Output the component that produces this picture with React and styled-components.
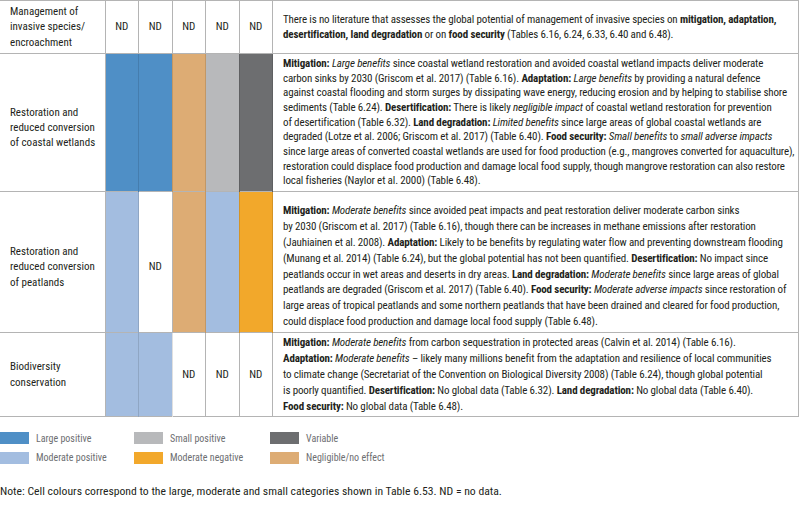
import React from "react"
import styled, { createGlobalStyle } from "styled-components"

const colors = {
  large: "#4f8fc6",
  moderate: "#a3bde0",
  small: "#b8b9bb",
  variable: "#6d6e70",
  negative: "#f2a82b",
  negligible: "#ddac74",
}

const GlobalStyle = createGlobalStyle`
  body {
    margin: 0;
    background: #fff;
    font-family: "Roboto Condensed", "Roboto", sans-serif;
    font-stretch: 75%;
    color: #231f20;
  }
`

// each row: label, swatch colours (null = ND), text lines as set in the source table
const rows = [
  {
    label: "Management of invasive species/ encroachment",
    height: 53,
    lineHeight: 15.3,
    shift: 0,
    textShift: 0,
    cells: [null, null, null, null, null],
    lines: [
      <>
        There is no literature that assesses the global potential of management of invasive species on{" "}
        <b>mitigation, adaptation,</b>
      </>,
      <>
        <b>desertification, land degradation</b> or on <b>food security</b> (Tables 6.16, 6.24, 6.33, 6.40 and
        6.48).
      </>,
    ],
  },
  {
    label: "Restoration and reduced conversion of coastal wetlands",
    height: 138,
    lineHeight: 14.7,
    shift: 10,
    textShift: 1,
    cells: ["large", "large", "negligible", "small", "variable"],
    lines: [
      <>
        <b>Mitigation:</b> <i>Large benefits</i> since coastal wetland restoration and avoided coastal wetland
        impacts deliver moderate
      </>,
      <>
        carbon sinks by 2030 (Griscom et al. 2017) (Table 6.16). <b>Adaptation:</b> <i>Large benefits</i> by
        providing a natural defence
      </>,
      <>
        against coastal flooding and storm surges by dissipating wave energy, reducing erosion and by helping to
        stabilise shore
      </>,
      <>
        sediments (Table 6.24). <b>Desertification:</b> There is likely <i>negligible impact</i> of coastal
        wetland restoration for prevention
      </>,
      <>
        of desertification (Table 6.32). <b>Land degradation:</b> <i>Limited benefits</i> since large areas of
        global coastal wetlands are
      </>,
      <>
        degraded (Lotze et al. 2006; Griscom et al. 2017) (Table 6.40). <b>Food security:</b>{" "}
        <i>Small benefits</i> to <i>small adverse impacts</i>
      </>,
      <>
        since large areas of converted coastal wetlands are used for food production (e.g., mangroves converted
        for aquaculture),
      </>,
      <>
        restoration could displace food production and damage local food supply, though mangrove restoration can
        also restore
      </>,
      <>local fisheries (Naylor et al. 2000) (Table 6.48).</>,
    ],
  },
  {
    label: "Restoration and reduced conversion of peatlands",
    height: 141,
    lineHeight: 15.9,
    shift: 10,
    textShift: 9,
    cells: ["moderate", null, "negligible", "moderate", "negative"],
    lines: [
      <>
        <b>Mitigation:</b> <i>Moderate benefits</i> since avoided peat impacts and peat restoration deliver
        moderate carbon sinks
      </>,
      <>
        by 2030 (Griscom et al. 2017) (Table 6.16), though there can be increases in methane emissions after
        restoration
      </>,
      <>
        (Jauhiainen et al. 2008). <b>Adaptation:</b> Likely to be benefits by regulating water flow and
        preventing downstream flooding
      </>,
      <>
        (Munang et al. 2014) (Table 6.24), but the global potential has not been quantified.{" "}
        <b>Desertification:</b> No impact since
      </>,
      <>
        peatlands occur in wet areas and deserts in dry areas. <b>Land degradation:</b>{" "}
        <i>Moderate benefits</i> since large areas of global
      </>,
      <>
        peatlands are degraded (Griscom et al. 2017) (Table 6.40). <b>Food security:</b>{" "}
        <i>Moderate adverse impacts</i> since restoration of
      </>,
      <>
        large areas of tropical peatlands and some northern peatlands that have been drained and cleared for food
        production,
      </>,
      <>could displace food production and damage local food supply (Table 6.48).</>,
    ],
  },
  {
    label: "Biodiversity conservation",
    height: 84,
    lineHeight: 16,
    shift: 0,
    textShift: 0,
    cells: ["moderate", "moderate", null, null, null],
    lines: [
      <>
        <b>Mitigation:</b> <i>Moderate benefits</i> from carbon sequestration in protected areas (Calvin et al.
        2014) (Table 6.16).
      </>,
      <>
        <b>Adaptation:</b> <i>Moderate benefits</i> – likely many millions benefit from the adaptation and
        resilience of local communities
      </>,
      <>
        to climate change (Secretariat of the Convention on Biological Diversity 2008) (Table 6.24), though global
        potential
      </>,
      <>
        is poorly quantified. <b>Desertification:</b> No global data (Table 6.32). <b>Land degradation:</b> No
        global data (Table 6.40).
      </>,
      <>
        <b>Food security:</b> No global data (Table 6.48).
      </>,
    ],
  },
]

const legend = [
  ["large", "Large positive"],
  ["small", "Small positive"],
  ["variable", "Variable"],
  ["moderate", "Moderate positive"],
  ["negative", "Moderate negative"],
  ["negligible", "Negligible/no effect"],
]

const colWidths = [105, 33.5, 33.5, 33.5, 33.5, 33.5, null]

const App = () => (
  <Page>
    <GlobalStyle />
    <Table>
      <colgroup>
        {colWidths.map((w, i) => (
          <Col key={i} $width={w} />
        ))}
      </colgroup>
      <tbody>
        {rows.map((row, i) => (
          <Row key={i} $height={row.height}>
            <Label $shift={row.shift}>{row.label}</Label>
            {row.cells.map((c, j) => (
              <Swatch key={j} $color={c && colors[c]} $shift={row.shift}>
                {c ? null : "ND"}
              </Swatch>
            ))}
            <Text $lineHeight={row.lineHeight} $shift={row.textShift}>
              {row.lines.map((line, k) => (
                <Line key={k}>{line}</Line>
              ))}
            </Text>
          </Row>
        ))}
      </tbody>
    </Table>
    <Legend>
      {legend.map(([key, name]) => (
        <LegendItem key={key}>
          <LegendBox $color={colors[key]} />
          {name}
        </LegendItem>
      ))}
    </Legend>
    <Note>
      Note: Cell colours correspond to the large, moderate and small categories shown in Table 6.53. ND = no data.
    </Note>
  </Page>
)

export default App

const Page = styled.div`
  width: 800px;
  height: 508px;
  overflow: hidden;
`

const Table = styled.table`
  width: 799px;
  border-collapse: collapse;
  table-layout: fixed;
  font-size: 11px;
  line-height: 15.3px;
`

const Col = styled.col`
  width: ${p => (p.$width ? `${p.$width}px` : "auto")};
`

const Row = styled.tr`
  height: ${p => p.$height}px;
  border-top: 1px solid #b4b4b4;
  border-bottom: 1px solid #b4b4b4;
`

const Label = styled.td`
  padding: ${p => p.$shift}px 6px 0 10px;
  vertical-align: middle;
  border-right: 1px solid #b4b4b4;
`

const Swatch = styled.td`
  background: ${p => p.$color || "#fff"};
  border-right: 1px solid ${p => (p.$color ? "rgba(0,0,0,0.12)" : "#b4b4b4")};
  text-align: center;
  vertical-align: middle;
  padding: ${p => p.$shift}px 0 0;
`

const Text = styled.td`
  padding: ${p => p.$shift}px 6px 0 10px;
  vertical-align: middle;
  line-height: ${p => p.$lineHeight}px;
  letter-spacing: -0.14px;
  border-right: 1px solid #b4b4b4;
  border-left: 1px solid #b4b4b4;
`

const Line = styled.div`
  white-space: nowrap;
`

const Legend = styled.div`
  display: grid;
  grid-template-columns: 134px 136px 1fr;
  row-gap: 7.5px;
  margin-top: 15px;
  font-size: 10px;
  color: #6d6e71;
`

const LegendItem = styled.div`
  display: flex;
  align-items: center;
  gap: 7px;
  height: 12px;
`

const LegendBox = styled.span`
  width: 29px;
  height: 12px;
  background: ${p => p.$color};
`

const Note = styled.p`
  margin: 20px 0 0;
  font-size: 11.7px;
  line-height: 15px;
  color: #231f20;
`
